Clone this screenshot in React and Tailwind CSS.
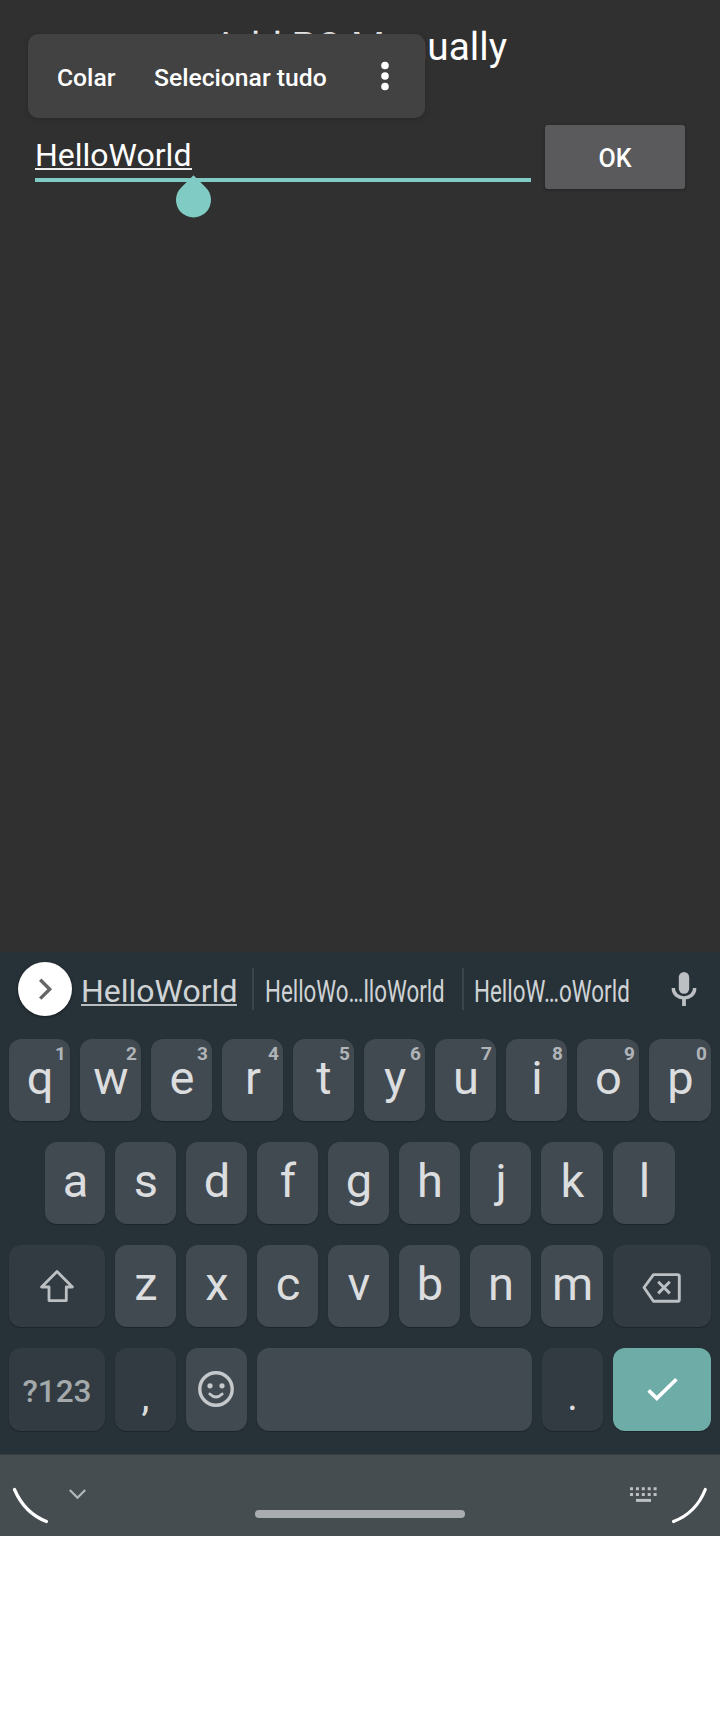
import React from "react";

function Key({ children, hint, className = "w-[61px] bg-[#424a51]" }) {
  return (
    <button
      className={`relative flex h-full shrink-0 items-center justify-center rounded-[12px] shadow-[0_1px_1px_#1c252a] ${className}`}
    >
      {hint && (
        <span className="absolute right-[4px] top-[4px] text-[19px] font-bold leading-[22px] text-[#b0b4b8]">{hint}</span>
      )}
      {children}
    </button>
  );
}

function Letter({ children }) {
  return <span className="-mt-[5px] pl-[1px] text-[47px] leading-[56px] text-[#dcdddf]">{children}</span>;
}

const topRow = [
  ["q", "1"], ["w", "2"], ["e", "3"], ["r", "4"], ["t", "5"],
  ["y", "6"], ["u", "7"], ["i", "8"], ["o", "9"], ["p", "0"],
];
const wide = "w-[62px] bg-[#424a51]";
const normal = "w-[61px] bg-[#424a51]";
const narrow = "w-[60px] bg-[#424a51]";

function ShiftIcon() {
  return (
    <svg className="h-[82px] w-[96px]" viewBox="0 0 96 82" fill="none" stroke="#bcc0c3" strokeWidth="2.8" strokeLinejoin="round">
      <path d="M48 26.6 L32.6 42 H40 V55.6 H57.3 V42 H63.4 Z" />
    </svg>
  );
}

function BackspaceIcon() {
  return (
    <svg className="h-[82px] w-[98px]" viewBox="0 0 98 82" fill="none" stroke="#bcc0c3" strokeWidth="2.9" strokeLinejoin="round">
      <path d="M31 42.5 L40.5 29.6 H64.5 Q66.3 29.6 66.3 31.4 V54.4 Q66.3 56.3 64.5 56.3 H40.5 Z" />
      <path d="M45.2 36.8 L56.8 48.4 M56.8 36.8 L45.2 48.4" />
    </svg>
  );
}

function EmojiIcon() {
  return (
    <svg className="h-[83px] w-[61px]" viewBox="0 0 61 83" fill="none" stroke="#c5c9cb">
      <circle cx="30" cy="41" r="16.2" strokeWidth="3.4" />
      <circle cx="24" cy="37.8" r="2.6" fill="#c5c9cb" stroke="none" />
      <circle cx="36" cy="37.8" r="2.6" fill="#c5c9cb" stroke="none" />
      <path d="M23.8 46 Q30 52 36.2 46" strokeWidth="2.8" strokeLinecap="round" />
    </svg>
  );
}

export default function App() {
  return (
    <div className="h-[1712px] w-[720px] bg-white font-['Roboto',sans-serif]">
      <main className="relative flex h-[952px] flex-col bg-[#303030] text-white">
        <h1 className="mt-[23px] h-[47px] text-center text-[38.8px] font-normal leading-[47px]">Add PC Manually</h1>
        <form className="mt-[55px] flex pl-[35px]" onSubmit={(e) => e.preventDefault()}>
          <div className="relative mt-[11px] h-[46px] w-[496px] border-b-[4px] border-[#80cbc4]">
            <div className="h-[34px] w-[157px] whitespace-nowrap border-b-2 border-[#eeeeee] text-[32px] leading-[38px]">HelloWorld</div>
            <svg className="absolute left-[140px] top-[39px] h-[44px] w-[37px]" viewBox="0 0 37 44">
              <path d="M18.5 0.2 L6.5 12.2 A17.5 17.5 0 1 0 30.5 12.2 Z" fill="#80cbc4" />
            </svg>
          </div>
          <button className="ml-[14px] h-[64px] w-[140px] rounded-[3px] bg-[#5a5a5c] pt-[4px] text-[25px] font-medium leading-[30px] shadow-[0_1px_3px_#222]">OK</button>
        </form>
        <div className="absolute left-[28px] top-[34px] flex h-[84px] w-[397px] items-center rounded-[10px] bg-[#424242] pl-[29px] text-[24.7px] font-medium leading-[30px] shadow-[0_1px_4px_#282828]">
          <span className="w-[97px] pt-[4px]">Colar</span>
          <span className="w-[216px] whitespace-nowrap pt-[4px]">Selecionar tudo</span>
          <svg className="h-[32px] w-[30px]" viewBox="0 0 30 32" fill="white">
            <circle cx="15" cy="5.5" r="3.8" />
            <circle cx="15" cy="16" r="3.8" />
            <circle cx="15" cy="26.5" r="3.8" />
          </svg>
        </div>
      </main>

      <section className="h-[502px] bg-[#273238]">
        <div className="flex h-[87px] items-start text-[32px] leading-[38px] text-[#cfd3d5]">
          <button className="ml-[18px] mt-[10px] h-[54px] w-[54px] rounded-full bg-white shadow-[0_1px_3px_#151b1f]">
            <svg className="h-[54px] w-[54px]" viewBox="0 0 54 54" fill="none" stroke="#666" strokeWidth="3.4">
              <path d="M22.2 17.8 L31.7 27.2 L22.2 36.6" />
            </svg>
          </button>
          <div className="ml-[9px] mt-[20px] h-[34px] w-[156px] whitespace-nowrap border-b-2 border-[#b9bdc0]">HelloWorld</div>
          <div className="ml-[15px] mt-[16px] h-[42px] w-[2px] bg-[#3b464c]" />
          <div className="ml-[11px] mt-[20px] w-[183px] whitespace-nowrap">
            <span className="inline-block origin-left scale-x-[0.697]">HelloWo…lloWorld</span>
          </div>
          <div className="ml-[14px] mt-[16px] h-[42px] w-[2px] bg-[#3b464c]" />
          <div className="ml-[10px] mt-[20px] w-[157px] whitespace-nowrap">
            <span className="inline-block origin-left scale-x-[0.7]">HelloW…oWorld</span>
          </div>
          <svg className="ml-[38px] mt-[18px] h-[38px] w-[30px]" viewBox="0 0 30 38">
            <rect x="9.8" y="2" width="10.4" height="21.8" rx="5.2" fill="#bcc0c3" />
            <path d="M4.3 18 C4.3 31.2 25.7 31.2 25.7 18" fill="none" stroke="#bcc0c3" strokeWidth="3.4" />
            <path d="M15 27 V36" stroke="#bcc0c3" strokeWidth="3.8" />
          </svg>
        </div>

        <div className="flex h-[82px] gap-[10px] pl-[9px]">
          {topRow.map(([letter, hint], i) => (
            <Key key={letter} hint={hint} className={i > 7 ? wide : normal}><Letter>{letter}</Letter></Key>
          ))}
        </div>
        <div className="mt-[21px] flex h-[82px] gap-[10px] pl-[45px]">
          {[..."asdfghjkl"].map((letter, i) => (
            <Key key={letter} className={i === 0 ? narrow : i > 6 ? wide : normal}><Letter>{letter}</Letter></Key>
          ))}
        </div>
        <div className="mt-[21px] flex h-[82px] gap-[10px] pl-[9px]">
          <Key className="w-[96px] bg-[#313b41]"><ShiftIcon /></Key>
          {[..."zxcvbnm"].map((letter) => (
            <Key key={letter} className={letter === "m" ? wide : normal}><Letter>{letter}</Letter></Key>
          ))}
          <Key className="w-[98px] bg-[#313b41]"><BackspaceIcon /></Key>
        </div>
        <div className="mt-[21px] flex h-[83px] gap-[10px] pl-[9px]">
          <Key className="w-[96px] bg-[#313b41]">
            <span className="mt-[4px] text-[31.5px] font-medium leading-[36px] text-[#a4a9ac]">?123</span>
          </Key>
          <Key className="w-[61px] bg-[#313b41]">
            <span className="mt-[13px] text-[40px] leading-[47px] text-[#dcdddf]">,</span>
          </Key>
          <Key className="w-[61px] bg-[#424a51]"><EmojiIcon /></Key>
          <Key className="w-[275px] bg-[#424a51]" />
          <Key className="w-[61px] bg-[#313b41]">
            <span className="mt-[13px] text-[40px] leading-[47px] text-[#dcdddf]">.</span>
          </Key>
          <Key className="w-[98px] bg-[#6eaca7]">
            <svg className="h-[83px] w-[98px]" viewBox="0 0 98 83" fill="none" stroke="white" strokeWidth="3.6">
              <path d="M35.6 42.4 L43.8 50.4 L63.4 31.2" />
            </svg>
          </Key>
        </div>
      </section>

      <nav className="flex h-[82px] items-start justify-between border-t border-[#353d41] bg-[#454d51]">
        <svg className="h-[81px] w-[100px]" viewBox="0 0 100 81" fill="none">
          <path d="M14.5 34.5 Q24.5 58 46.5 66.5" stroke="white" strokeWidth="3.2" strokeLinecap="round" />
          <path d="M69.8 35 L77.5 42.7 L85.2 35" stroke="#b4b8ba" strokeWidth="2.2" />
        </svg>
        <div className="mt-[55px] h-[8px] w-[210px] rounded-full bg-[#a9adaf]" />
        <svg className="h-[81px] w-[100px]" viewBox="620 0 100 81" fill="none">
          <path d="M705.3 34.5 Q696 58 673.5 66.5" stroke="white" strokeWidth="3.2" strokeLinecap="round" />
          <path d="M630 33.8 H657 M630 39.6 H657" stroke="#bcc0c2" strokeWidth="3" strokeDasharray="3 2.9" />
          <path d="M636 45.4 H651" stroke="#bcc0c2" strokeWidth="3" />
        </svg>
      </nav>
    </div>
  );
}
